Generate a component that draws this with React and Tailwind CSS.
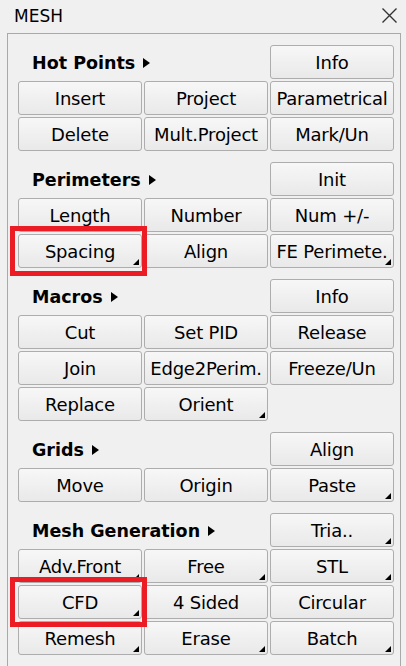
// MESH tool panel
const sections = [
  {
    title: 'Hot Points',
    head: { label: 'Info' },
    rows: [
      [{ label: 'Insert' }, { label: 'Project' }, { label: 'Parametrical' }],
      [{ label: 'Delete' }, { label: 'Mult.Project' }, { label: 'Mark/Un' }],
    ],
  },
  {
    title: 'Perimeters',
    head: { label: 'Init' },
    rows: [
      [{ label: 'Length' }, { label: 'Number' }, { label: 'Num +/-' }],
      [{ label: 'Spacing', menu: true, marked: true }, { label: 'Align' }, { label: 'FE Perimete.', menu: true }],
    ],
  },
  {
    title: 'Macros',
    head: { label: 'Info' },
    rows: [
      [{ label: 'Cut' }, { label: 'Set PID' }, { label: 'Release' }],
      [{ label: 'Join' }, { label: 'Edge2Perim.' }, { label: 'Freeze/Un' }],
      [{ label: 'Replace' }, { label: 'Orient', menu: true }],
    ],
  },
  {
    title: 'Grids',
    head: { label: 'Align' },
    rows: [[{ label: 'Move' }, { label: 'Origin' }, { label: 'Paste', menu: true }]],
  },
  {
    title: 'Mesh Generation',
    head: { label: 'Tria..', menu: true },
    rows: [
      [{ label: 'Adv.Front', menu: true }, { label: 'Free', menu: true }, { label: 'STL', menu: true }],
      [{ label: 'CFD', menu: true, marked: true }, { label: '4 Sided' }, { label: 'Circular' }],
      [{ label: 'Remesh', menu: true }, { label: 'Erase', menu: true }, { label: 'Batch', menu: true }],
    ],
  },
]

function Btn({ label, menu, marked }) {
  return (
    <div className="relative">
      <button className="relative flex h-[34px] w-full items-center justify-center whitespace-nowrap rounded-[3px] border border-[#adadad] bg-gradient-to-b from-[#f7f7f7] to-[#e9e9e9] pt-[2px] text-[18px] leading-none tracking-[-0.2px] text-black">
        {label}
        {menu && (
          <svg className="absolute bottom-[2px] right-[2px]" width="6" height="6" viewBox="0 0 6 6">
            <path d="M6 0 L6 6 L0 6 Z" fill="#000" />
          </svg>
        )}
      </button>
      {marked && (
        <span className="absolute -bottom-[8px] -left-[8px] -right-[5px] -top-[8px] z-10 border-[5px] border-[#ec1c24]" />
      )}
    </div>
  )
}

export default function App() {
  return (
    <div className="h-[666px] w-[406px] overflow-hidden bg-[#f0f0f0] text-black" style={{ fontFamily: '"DejaVu Sans", sans-serif' }}>
      {/* title bar */}
      <div className="flex h-[33px] items-start justify-between pl-[14px] pr-[8px] pt-[6px]">
        <span className="text-[17px] leading-[20px]">MESH</span>
        <svg width="17" height="17" viewBox="0 0 17 17" className="mt-[1px]">
          <path d="M1.5 1.5 L15.5 15.5 M15.5 1.5 L1.5 15.5" stroke="#333" strokeWidth="1.4" fill="none" />
        </svg>
      </div>

      {/* panel */}
      <div className="ml-[7px] mr-[5px] h-[700px] border border-[#a9a9a9] pl-[10px] pt-[11px]">
        <div className="flex w-[376px] flex-col gap-[11px]">
          {sections.map(s => (
            <div key={s.title} className="grid grid-cols-3 gap-[2px]">
              <div className="col-span-2 flex items-center pl-[14px] pt-[2px] text-[17.5px] font-bold">
                {s.title}
                <svg className="ml-[8px]" width="7" height="10" viewBox="0 0 7 10">
                  <path d="M0 0 L7 5 L0 10 Z" fill="#000" />
                </svg>
              </div>
              <Btn {...s.head} />
              {s.rows.flat().map((b, i) => (
                <Btn key={i} {...b} />
              ))}
            </div>
          ))}
        </div>
      </div>
    </div>
  )
}
